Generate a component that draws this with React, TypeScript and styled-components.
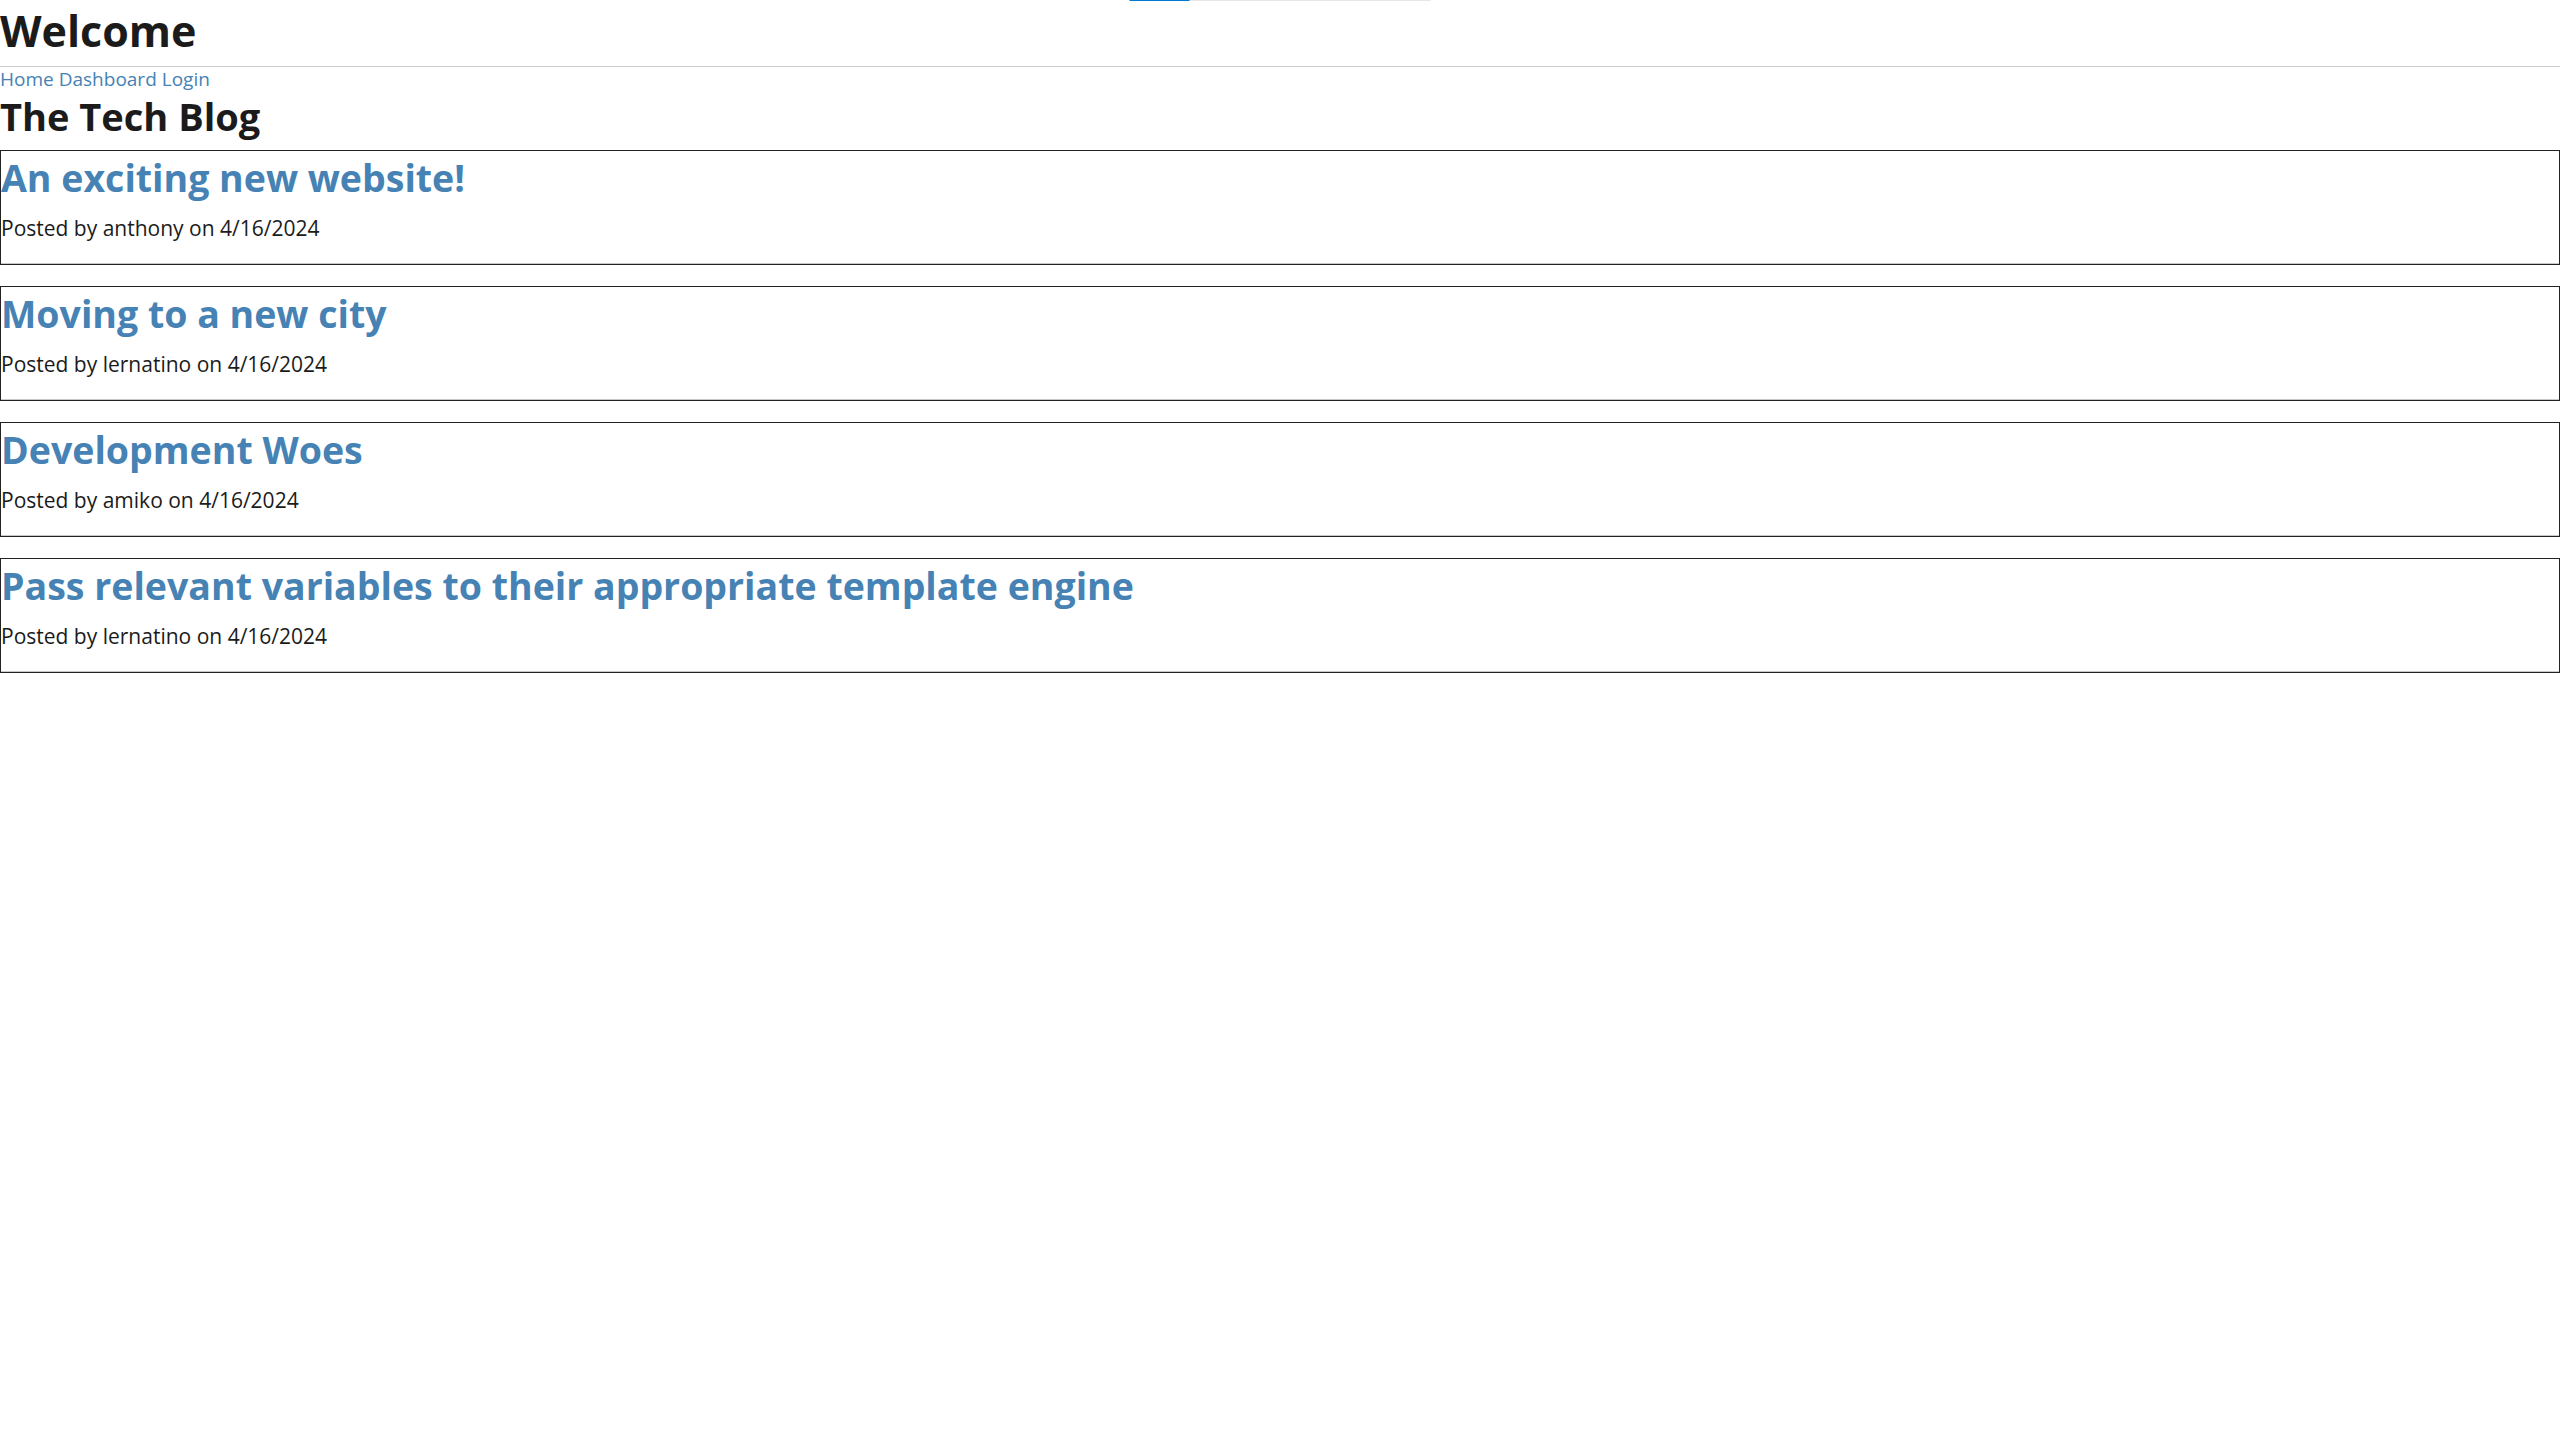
import React from "react";
import styled, { createGlobalStyle } from "styled-components";

const GlobalStyle = createGlobalStyle`
  html, body {
    margin: 0;
    padding: 0;
    background: #ffffff;
  }
  body {
    font-family: "Open Sans", "Noto Sans", "Liberation Sans", sans-serif;
    color: #1b1b1b;
  }
`;

const Page = styled.div`
  position: relative;
  display: flex;
  flex-direction: column;
`;

const LoadBar = styled.div`
  position: absolute;
  top: 0;
  left: 50%;
  width: 301px;
  height: 1px;
  transform: translateX(-50%);
  background: #e6e6e6;
  display: flex;
`;

const LoadFill = styled.div`
  height: 100%;
  background: #0078d4;
`;

const Header = styled.header`
  border-bottom: 1px solid #cccccc;
  padding-bottom: 5px;
`;

const Title = styled.h1`
  margin: 0;
  font-size: 43px;
  font-weight: 700;
  line-height: 61px;
  color: #1b1b1b;
`;

const Nav = styled.nav`
  display: flex;
  gap: 5px;
  font-size: 19px;
  line-height: 25px;
`;

const NavLink = styled.a`
  color: steelblue;
  text-decoration: none;
`;

const Main = styled.main`
  display: flex;
  flex-direction: column;
`;

const BlogTitle = styled.h2`
  margin: 0 0 10px;
  font-size: 38px;
  font-weight: 700;
  line-height: 48px;
  color: #1b1b1b;
`;

const PostList = styled.section`
  display: flex;
  flex-direction: column;
  gap: 21px;
`;

const Card = styled.article`
  border: 1px solid #222222;
  box-shadow: inset 0 -1px 0 #c8c8c8;
  padding-bottom: 22px;
`;

const PostTitle = styled.h3`
  margin: 0;
  font-size: 37.5px;
  font-weight: 700;
  line-height: 54px;
  color: steelblue;
`;

const Meta = styled.p`
  margin: 9px 0 0;
  font-size: 21px;
  line-height: 28px;
  color: #1b1b1b;
`;

const posts = [
  { title: "An exciting new website!", author: "anthony", date: "4/16/2024" },
  { title: "Moving to a new city", author: "lernatino", date: "4/16/2024" },
  { title: "Development Woes", author: "amiko", date: "4/16/2024" },
  {
    title: "Pass relevant variables to their appropriate template engine",
    author: "lernatino",
    date: "4/16/2024",
  },
];

export default function App() {
  return (
    <Page>
      <GlobalStyle />
      <LoadBar>
        <LoadFill style={{ width: "20%" }} />
      </LoadBar>
      <Header>
        <Title>Welcome</Title>
      </Header>
      <Nav>
        <NavLink href="#">Home</NavLink>
        <NavLink href="#">Dashboard</NavLink>
        <NavLink href="#">Login</NavLink>
      </Nav>
      <Main>
        <BlogTitle>The Tech Blog</BlogTitle>
        <PostList>
          {posts.map((p) => (
            <Card key={p.title}>
              <PostTitle>{p.title}</PostTitle>
              <Meta>
                Posted by {p.author} on {p.date}
              </Meta>
            </Card>
          ))}
        </PostList>
      </Main>
    </Page>
  );
}
